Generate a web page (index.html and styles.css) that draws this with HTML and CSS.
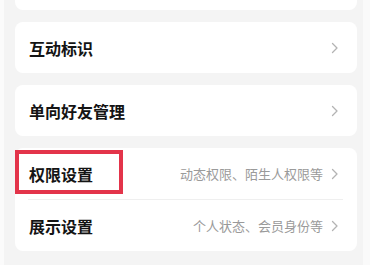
FILE: index.html
```html
<!DOCTYPE html>
<html lang="zh">
<head>
<meta charset="utf-8">
<link rel="stylesheet" href="styles.css">
</head>
<body>
<div class="page">
  <div class="card card-top"></div>
  <div class="card">
    <div class="row">
      <span class="title">互动标识</span>
      <span class="right">
        <svg class="chev" width="8" height="12" viewBox="0 0 8 12"><polyline points="1.5,1.5 6,6 1.5,10.5" fill="none" stroke="#b3b3b3" stroke-width="1.3" stroke-linecap="round" stroke-linejoin="round"/></svg>
      </span>
    </div>
  </div>
  <div class="card">
    <div class="row">
      <span class="title">单向好友管理</span>
      <span class="right">
        <svg class="chev" width="8" height="12" viewBox="0 0 8 12"><polyline points="1.5,1.5 6,6 1.5,10.5" fill="none" stroke="#b3b3b3" stroke-width="1.3" stroke-linecap="round" stroke-linejoin="round"/></svg>
      </span>
    </div>
  </div>
  <div class="card">
    <div class="row">
      <span class="title">权限设置</span>
      <span class="right">
        <span class="sub">动态权限、陌生人权限等</span>
        <svg class="chev" width="8" height="12" viewBox="0 0 8 12"><polyline points="1.5,1.5 6,6 1.5,10.5" fill="none" stroke="#b3b3b3" stroke-width="1.3" stroke-linecap="round" stroke-linejoin="round"/></svg>
      </span>
      <div class="highlight"></div>
    </div>
    <div class="divider"></div>
    <div class="row">
      <span class="title">展示设置</span>
      <span class="right">
        <span class="sub">个人状态、会员身份等</span>
        <svg class="chev" width="8" height="12" viewBox="0 0 8 12"><polyline points="1.5,1.5 6,6 1.5,10.5" fill="none" stroke="#b3b3b3" stroke-width="1.3" stroke-linecap="round" stroke-linejoin="round"/></svg>
      </span>
    </div>
  </div>
</div>
</body>
</html>
```
FILE: styles.css
```css
html, body {
  margin: 0;
  padding: 0;
}
body {
  width: 370px;
  height: 265px;
  overflow: hidden;
  background: linear-gradient(to right, #fbfbfb 0, #fbfbfb 4px, #f4f4f4 4px, #f4f4f4 363px, #fafafa 363px);
  font-family: "Noto Sans CJK SC", "Noto Sans", sans-serif;
}
.page {
  display: flex;
  flex-direction: column;
  gap: 12px;
  padding: 0 13px 0 15px;
}
.card {
  background: #ffffff;
  border-radius: 8px;
}
.card-top {
  height: 10px;
  border-radius: 0 0 8px 8px;
}
.row {
  position: relative;
  height: 51px;
  display: flex;
  align-items: center;
  justify-content: space-between;
  padding: 0 18px 0 14px;
}
.title {
  font-size: 16px;
  font-weight: 600;
  color: #141414;
  letter-spacing: 0;
}
.right {
  display: flex;
  align-items: center;
  gap: 8px;
}
.sub {
  font-size: 13px;
  color: #9a9a9a;
}
.chev {
  display: block;
}
.divider {
  height: 1px;
  background: #efefef;
  margin: 0 14px 0 13px;
}
.highlight {
  position: absolute;
  left: 0;
  top: 2px;
  width: 100px;
  height: 36px;
  border: 4px solid #e3344a;
}
```
